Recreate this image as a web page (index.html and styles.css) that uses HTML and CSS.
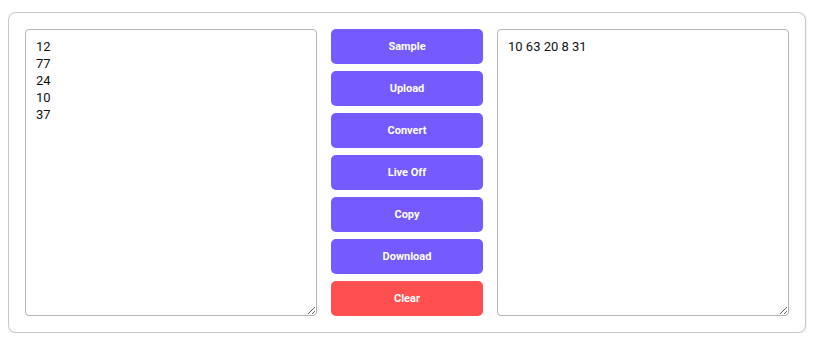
FILE: index.html
```html
<!DOCTYPE html>
<html>
<head>
<meta charset="utf-8">
<link rel="stylesheet" href="styles.css">
</head>
<body>
<div class="card">
  <textarea class="box">12
77
24
10
37</textarea>
  <div class="actions">
    <button class="btn">Sample</button>
    <button class="btn">Upload</button>
    <button class="btn">Convert</button>
    <button class="btn">Live Off</button>
    <button class="btn">Copy</button>
    <button class="btn">Download</button>
    <button class="btn danger">Clear</button>
  </div>
  <textarea class="box">10 63 20 8 31</textarea>
</div>
</body>
</html>
```
FILE: styles.css
```css
body {
  margin: 12px 8px 8px 8px;
  background: #fff;
  font-family: Roboto, "Liberation Sans", sans-serif;
}
.card {
  width: 798px;
  box-sizing: border-box;
  border: 1px solid #c8c8c8;
  border-radius: 8px;
  box-shadow: 0 1px 4px rgba(0,0,0,0.12);
  padding: 16px;
  display: flex;
  gap: 14px;
  background: #fff;
}
.box {
  width: 292px;
  height: 287px;
  box-sizing: border-box;
  border: 1px solid #b5b5b5;
  border-radius: 4px;
  padding: 8px 10px;
  font-family: Roboto, "Liberation Sans", sans-serif;
  font-size: 13px;
  line-height: 17px;
  color: #111;
  resize: both;
  margin: 0;
  outline: none;
}
.actions {
  width: 152px;
  display: flex;
  flex-direction: column;
  gap: 7px;
}
.btn {
  height: 35px;
  border: none;
  border-radius: 5px;
  background: #755bfd;
  color: #fff;
  font-family: Roboto, "Liberation Sans", sans-serif;
  font-weight: 700;
  font-size: 11px;
  padding: 0;
  cursor: pointer;
}
.btn.danger {
  background: #ff4f50;
}
```
